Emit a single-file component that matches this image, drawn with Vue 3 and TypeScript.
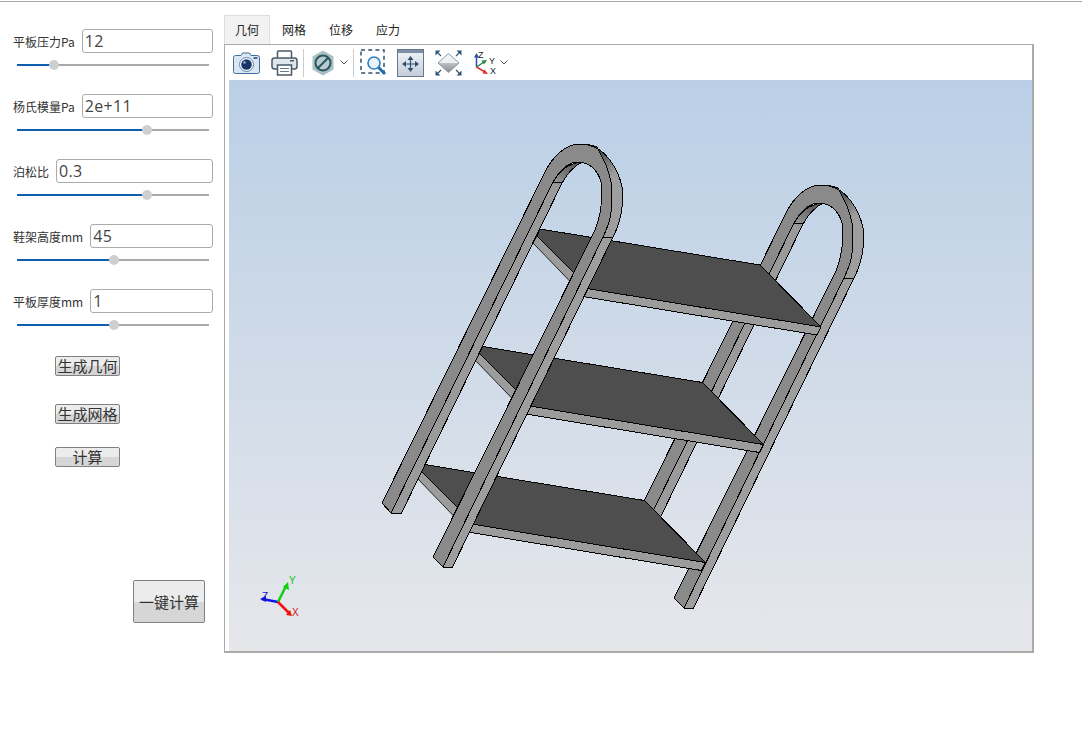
<script setup lang="ts">
interface Param { label: string; value: string; pos: number }
const params: Param[] = [
  { label: '平板压力Pa', value: '12', pos: 37 },
  { label: '杨氏模量Pa', value: '2e+11', pos: 130 },
  { label: '泊松比', value: '0.3', pos: 130 },
  { label: '鞋架高度mm', value: '45', pos: 97 },
  { label: '平板厚度mm', value: '1', pos: 97 },
]
const tabs = ['几何', '网格', '位移', '应力']
const plateOffsets = ['translate(0 0)', 'translate(-57.5 117.5)', 'translate(-115.5 235.5)']
</script>

<template>
  <div class="page">
    <aside class="side">
      <div v-for="p in params" :key="p.label" class="param">
        <div class="row">
          <label class="lbl">{{ p.label }}</label>
          <input class="inp" :value="p.value" />
        </div>
        <div class="slider">
          <div class="fill" :style="{ width: p.pos + 'px' }"></div>
          <div class="knob" :style="{ left: p.pos - 5 + 'px' }"></div>
        </div>
      </div>
      <button class="btn b1">生成几何</button>
      <button class="btn b2">生成网格</button>
      <button class="btn b3">计算</button>
      <button class="btn big">一键计算</button>
    </aside>
    <main class="main">
      <div class="tabs">
        <div v-for="(t, i) in tabs" :key="t" class="tab" :class="{ on: i === 0 }">{{ t }}</div>
      </div>
      <div class="pane">
        <div class="tools">
          <svg class="ic cam" width="27" height="22" viewBox="0 0 27 22">
            <path d="M8 3.500 9.500 1h7L18 3.500h6.500a2 2 0 0 1 2 2v14a2 2 0 0 1-2 2h-22a2 2 0 0 1-2-2v-14a2 2 0 0 1 2-2z" fill="#dbe6f2" stroke="#3f6f9f"/>
            <rect x="20.500" y="5" width="4" height="2" fill="#3f6f9f"/>
            <circle cx="13.500" cy="12.500" r="7" fill="#fff" stroke="#5d86b0"/>
            <circle cx="13.500" cy="12.500" r="5.300" fill="#17376b"/>
            <circle cx="11.500" cy="10.500" r="1.300" fill="#8fb0d8"/>
          </svg>
          <svg class="ic prn" width="27" height="26" viewBox="0 0 27 26">
            <rect x="6.500" y="1" width="14" height="8" rx="1" fill="#fff" stroke="#4a5a68" stroke-width="1.500"/>
            <rect x="1" y="8" width="25" height="11" rx="2.500" fill="#dfe6ec" stroke="#4a5a68" stroke-width="1.500"/>
            <rect x="19" y="10" width="4" height="1.500" fill="#4a5a68"/>
            <rect x="6.500" y="15" width="14" height="10" fill="#fff" stroke="#4a5a68" stroke-width="1.500"/>
            <path d="M9 18.500h9M9 21.500h9" stroke="#6a7a88"/>
          </svg>
          <span class="sep s1"></span>
          <svg class="ic hex" width="22" height="26" viewBox="0 0 22 26">
            <path d="M11 .5 21.500 6.500v13L11 25.500.5 19.500v-13z" fill="#a8bfc4"/>
            <circle cx="11" cy="13" r="7.500" fill="#b7cbcf" stroke="#29575f" stroke-width="2"/>
            <path d="M6 18 16 8" stroke="#29575f" stroke-width="2"/>
          </svg>
          <svg class="ic chev c1" width="8" height="5" viewBox="0 0 8 5"><path d="M.5.5 4 4 7.500.5" fill="none" stroke="#555"/></svg>
          <span class="sep s2"></span>
          <svg class="ic zm" width="27" height="27" viewBox="0 0 27 27">
            <rect x="1" y="1" width="23" height="23" fill="none" stroke="#2f4f6f" stroke-width="1.500" stroke-dasharray="4 3.200"/>
            <circle cx="14" cy="14" r="6" fill="#eaf2fa" stroke="#2f7fbf" stroke-width="1.600"/>
            <path d="M18.500 18.500 25 25" stroke="#1f6fb5" stroke-width="3"/>
          </svg>
          <svg class="ic fit" width="27" height="28" viewBox="0 0 27 28">
            <defs>
              <linearGradient id="fitbg" x1="0" y1="0" x2="0" y2="1">
                <stop offset="0" stop-color="#f2f5f9"/>
                <stop offset="1" stop-color="#c3ccd9"/>
              </linearGradient>
            </defs>
            <rect x=".5" y=".5" width="26" height="27" fill="url(#fitbg)" stroke="#66788e"/>
            <rect x="1" y="1" width="25" height="3" fill="#7d8ea5"/>
            <path d="M13.500 9v12M7.500 15h12" stroke="#2f4f73" stroke-width="1.200"/>
            <path d="M13.500 7 10.500 11h6zM13.500 23 10.500 19h6zM5 15 9 12v6zM22 15 18 12v6z" fill="#2f4f73"/>
          </svg>
          <svg class="ic iso" width="27" height="26" viewBox="0 0 27 26">
            <defs>
              <linearGradient id="isobg" x1="0" y1="0" x2="0" y2="1">
                <stop offset="0" stop-color="#f5f6f7"/>
                <stop offset=".5" stop-color="#eceef0"/>
                <stop offset=".5" stop-color="#bfc2c6"/>
                <stop offset="1" stop-color="#85898e"/>
              </linearGradient>
            </defs>
            <path d="M13.500 3.500 24 13 13.500 22.500 3 13z" fill="url(#isobg)" stroke="#8a96a2"/>
            <path d="M.5.5h5l-5 5zM26.500.5h-5l5 5zM.5 25.500h5l-5-5zM26.500 25.500h-5l5-5z" fill="#2f5578"/>
            <path d="M2.500 2.500 6 6M24.500 2.500 21 6M2.500 23.500 6 20M24.500 23.500 21 20" stroke="#2f5578" stroke-width="1.200"/>
          </svg>
          <svg class="ic tri" width="24" height="27" viewBox="0 0 24 27">
            <path d="M2.500 18V7" stroke="#1f4fb5" stroke-width="1.500"/>
            <path d="M2.500 4 0 8.500h5z" fill="#1f4fb5"/>
            <path d="M2.500 18 10 13" stroke="#238a4f" stroke-width="1.500"/>
            <path d="M13 11 7.500 11.500l2.500 4z" fill="#238a4f"/>
            <path d="M2.500 18 11 23" stroke="#e03030" stroke-width="1.500"/>
            <path d="M14 25 8.500 24.500l2-4z" fill="#e03030"/>
            <text x="4" y="9" class="tl">Z</text>
            <text x="15" y="15" class="tl">Y</text>
            <text x="16" y="25" class="tl">X</text>
          </svg>
          <svg class="ic chev c2" width="8" height="5" viewBox="0 0 8 5"><path d="M.5.5 4 4 7.500.5" fill="none" stroke="#555"/></svg>
        </div>
        <svg class="view" width="803" height="571" viewBox="229 80 803 571">
          <defs>
            <linearGradient id="bg" x1="0" y1="0" x2="0" y2="1">
              <stop offset="0" stop-color="#bacfe6"/>
              <stop offset="1" stop-color="#e6e7eb"/>
            </linearGradient>
            <linearGradient id="band" gradientUnits="userSpaceOnUse" x1="596" y1="148" x2="614" y2="174">
              <stop offset="0" stop-color="#3f3f3f"/>
              <stop offset="1" stop-color="#9e9e9e"/>
            </linearGradient>
            <linearGradient id="inner" gradientUnits="userSpaceOnUse" x1="580" y1="160" x2="556" y2="186">
              <stop offset="0" stop-color="#4a4a4a"/>
              <stop offset="1" stop-color="#9a9a9a"/>
            </linearGradient>
            <g id="frame" stroke="#000" stroke-width="1" stroke-linejoin="round">
              <path d="M391 513 553 182C559 172 567 163 583 162 573 166 567 174 562 183L401 514Z" fill="url(#inner)"/>
              <path d="M382 503 545 172C551 160 563 144 580 144 590 144 594 146 597 147 604 160 612 175 612 193 612 215 610 222 603 237L443 567 433 557 595 230C600 218 602 205 602 190 602 175 592 162 578 162 567 162 559 172 553 182L391 513Z" fill="#8a8a8a"/>
              <path d="M588 145C605 148 618 168 622 187 624 200 622 220 613 237L452 568 443 567 603 237C610 222 612 215 612 193 612 175 604 160 597 147 594 146 591 145 588 145Z" fill="url(#band)"/>
              <path d="M553 182 562 183M603 237 613 237.500" fill="none"/>
            </g>
            <g id="plate" stroke="#000" stroke-width="1" stroke-linejoin="round">
              <path d="M537 236 590 289 585 297 533 243Z" fill="#9c9c9c" stroke-width=".8"/>
              <path d="M576 286.700 821 327 817 335 572 294.700Z" fill="#9c9c9c"/>
              <path d="M540 229 760 265 821 327 590 289 537 236Z" fill="#4e4e4e"/>
            </g>
          </defs>
          <rect x="229" y="80" width="803" height="571" fill="url(#bg)"/>
          <g shape-rendering="crispEdges">
            <use href="#frame" transform="translate(241 41)"/>
            <use v-for="t in plateOffsets" :key="t" href="#plate" :transform="t"/>
            <use href="#frame"/>
          </g>
          <path d="M278 602 262 599" stroke="#1010f0" stroke-width="2.500"/>
          <path d="M266 596 260 599 266 602z" fill="#1010f0"/>
          <path d="M278 602 286 586" stroke="#10d010" stroke-width="2.500"/>
          <path d="M283 587 288 582 289 590z" fill="#10d010"/>
          <path d="M278 602 289 613" stroke="#f01010" stroke-width="2.500"/>
          <path d="M286 615 292 616 290 610z" fill="#f01010"/>
          <text x="262" y="600" class="ax zc">Z</text>
          <text x="289" y="584" class="ax yc">Y</text>
          <text x="292" y="616" class="ax xc">X</text>
        </svg>
      </div>
    </main>
  </div>
</template>

<style>
html, body { margin: 0; background: #fff; }
</style>

<style scoped>
.page {
  width: 1082px;
  height: 744px;
  margin-top: 1px;
  box-sizing: border-box;
  border-top: 1px solid #a8a8a8;
  display: flex;
  font-family: "Noto Sans CJK SC", "Noto Sans", sans-serif;
  overflow: hidden;
  position: relative;
}
.side {
  width: 224px;
  flex: none;
  padding-top: 27px;
  box-sizing: border-box;
  display: flex;
  flex-direction: column;
  align-items: flex-start;
}
.param { width: 224px; height: 65px; }
.row {
  height: 24px;
  display: flex;
  align-items: center;
  padding: 0 11px 0 13px;
  gap: 7px;
}
.lbl { font-size: 12px; color: #333; white-space: nowrap; }
.inp {
  flex: 1;
  min-width: 0;
  height: 24px;
  box-sizing: border-box;
  border: 1px solid #aaa;
  border-radius: 3px;
  padding: 0 2px;
  font: 16px "Open Sans", sans-serif;
  color: #444;
  outline: none;
  letter-spacing: .3px;
}
.slider {
  position: relative;
  margin: 11px 0 0 17px;
  width: 192px;
  height: 2px;
  background: #aaa;
}
.fill { height: 2px; background: #0f5fb0; }
.knob {
  position: absolute;
  top: -4px;
  width: 10px;
  height: 10px;
  border-radius: 50%;
  background: #cfcfcf;
}
.btn {
  width: 65px;
  height: 20px;
  margin-left: 55px;
  padding: 0;
  box-sizing: border-box;
  border: 1px solid #808080;
  border-radius: 2px;
  background: linear-gradient(#ececec 50%, #d6d6d6 50%);
  font: 15px/18px "Noto Sans CJK SC", sans-serif;
  color: #333;
  white-space: nowrap;
}
.b1 { margin-top: 2px; }
.b2 { margin-top: 28px; }
.b3 { margin-top: 23px; }
.big { width: 72px; height: 43px; margin: 113px 0 0 133px; }
.main { flex: none; width: 810px; padding-top: 13px; }
.tabs { display: flex; height: 29px; font-size: 12px; color: #222; }
.tab {
  width: 46px;
  margin-right: 1px;
  box-sizing: border-box;
  text-align: center;
  line-height: 30px;
}
.tab.on {
  background: #f2f2f2;
  border: 1px solid #ddd;
  border-bottom: none;
  line-height: 28px;
}
.pane {
  width: 810px;
  height: 609px;
  box-sizing: border-box;
  border: 1px solid #aaa;
  border-right-width: 2px;
  border-bottom-width: 2px;
  padding-left: 4px;
  display: flex;
  flex-direction: column;
}
.tools {
  height: 35px;
  flex: none;
  display: flex;
  align-items: center;
  position: relative;
}
.ic { flex: none; display: block; }
.cam { margin-left: 4px; }
.prn { margin-left: 11px; }
.sep { width: 1px; height: 28px; background: #ccc; flex: none; }
.s1 { margin-left: 5px; }
.hex { margin-left: 8px; }
.c1 { margin-left: 6px; }
.s2 { margin-left: 5px; }
.zm { margin-left: 6px; }
.fit { margin-left: 10px; }
.iso { margin-left: 11px; }
.tri { margin-left: 12px; }
.c2 { margin-left: 2px; }
.tl { font: 9px "Liberation Sans", sans-serif; fill: #222; }
.view { display: block; flex: none; }
.ax { font: 10px "Liberation Sans", sans-serif; }
.zc { fill: #1010c0; }
.yc { fill: #10c010; }
.xc { fill: #d02020; }
</style>
